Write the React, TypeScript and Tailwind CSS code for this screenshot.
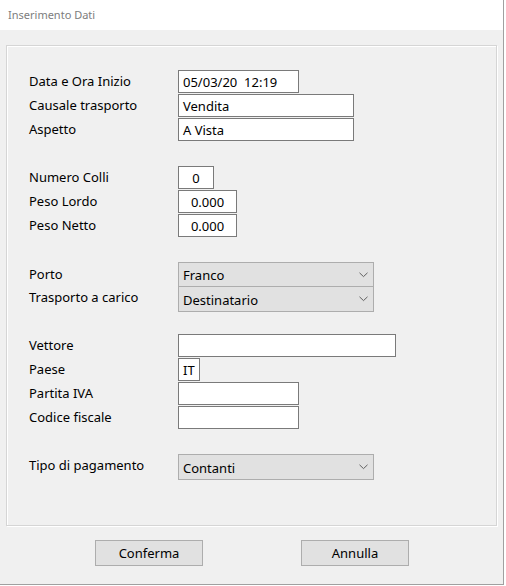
import React from "react";

const font = { fontFamily: '"Noto Sans", "Open Sans", sans-serif' };

function Chevron() {
  return (
    <svg width="9" height="6" viewBox="0 0 9 6" className="shrink-0">
      <path d="M0.5 0.8 L4.5 4.6 L8.5 0.8" fill="none" stroke="#606060" strokeWidth="1" />
    </svg>
  );
}

function Label({ children, top = "pt-px" }: { children: React.ReactNode; top?: string }) {
  return <div className={`w-[149px] shrink-0 leading-[20px] ${top}`}>{children}</div>;
}

function Input({ w, value = "", center = false }: { w: string; value?: string; center?: boolean }) {
  return (
    <div
      className={`${w} h-[23px] shrink-0 bg-white border border-[#7a7a7a] flex items-center leading-[20px] pt-px ${
        center ? "justify-center" : "pl-[4px]"
      } whitespace-pre`}
    >
      {value}
    </div>
  );
}

function Select({ value, h, extra = "" }: { value: string; h: string; extra?: string }) {
  return (
    <div
      className={`w-[196px] ${h} shrink-0 bg-[#e1e1e1] border border-[#adadad] flex items-center justify-between pl-[4px] pr-[5px] leading-[20px] ${extra}`}
    >
      <span className="pt-px">{value}</span>
      <Chevron />
    </div>
  );
}

function Row({ children, h = "h-[24px]" }: { children: React.ReactNode; h?: string }) {
  return <div className={`flex items-start ${h}`}>{children}</div>;
}

export default function App() {
  return (
    <div className="w-[506px] h-[586px] bg-white" style={font}>
      <div className="w-[504px] h-[585px] border-r border-b border-[#a0a0a0] bg-[#f0f0f0] flex flex-col text-[13px] text-[#000]">
        <div className="h-[30px] bg-white flex items-center pl-[8px] text-[11px] text-[#7d7d7d]">Inserimento Dati</div>
        <div className="flex-1 flex flex-col">
          <div className="mt-[15px] ml-[6px] w-[491px] h-[481px] border border-[#d5d5d5] shadow-[inset_1px_1px_0_#ffffff,1px_1px_0_#ffffff] pl-[22px] pt-[24px] flex flex-col">
            <Row>
              <Label>Data e Ora Inizio</Label>
              <Input w="w-[121px]" value="05/03/20  12:19" />
            </Row>
            <Row>
              <Label>Causale trasporto</Label>
              <Input w="w-[176px]" value="Vendita" />
            </Row>
            <Row>
              <Label>Aspetto</Label>
              <Input w="w-[176px]" value="A Vista" />
            </Row>

            <div className="mt-[24px]" />
            <Row>
              <Label>Numero Colli</Label>
              <Input w="w-[36px]" value="0" center />
            </Row>
            <Row>
              <Label>Peso Lordo</Label>
              <Input w="w-[59px]" value="0.000" center />
            </Row>
            <Row>
              <Label>Peso Netto</Label>
              <Input w="w-[59px]" value="0.000" center />
            </Row>

            <div className="mt-[24px]" />
            <Row>
              <Label top="pt-[2px]">Porto</Label>
              <Select value="Franco" h="h-[25px]" />
            </Row>
            <Row h="h-[26px]">
              <Label>Trasporto a carico</Label>
              <Select value="Destinatario" h="h-[26px]" />
            </Row>

            <div className="mt-[22px]" />
            <Row>
              <Label>Vettore</Label>
              <Input w="w-[218px]" />
            </Row>
            <Row>
              <Label>Paese</Label>
              <Input w="w-[22px]" value="IT" />
            </Row>
            <Row>
              <Label>Partita IVA</Label>
              <Input w="w-[121px]" />
            </Row>
            <Row>
              <Label>Codice fiscale</Label>
              <Input w="w-[121px]" />
            </Row>

            <div className="mt-[24px]" />
            <Row h="h-[26px]">
              <Label top="pt-[1px]">Tipo di pagamento</Label>
              <Select value="Contanti" h="h-[26px]" />
            </Row>
          </div>

          <div className="mt-[14px] flex">
            <div className="ml-[95px] w-[108px] h-[26px] bg-[#e1e1e1] border border-[#adadad] flex items-center justify-center pt-px">
              Conferma
            </div>
            <div className="ml-[98px] w-[108px] h-[26px] bg-[#e1e1e1] border border-[#adadad] flex items-center justify-center pt-px">
              Annulla
            </div>
          </div>
        </div>
      </div>
    </div>
  );
}
